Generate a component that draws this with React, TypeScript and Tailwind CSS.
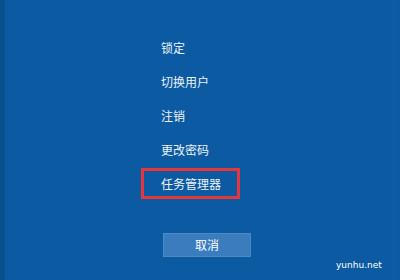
const items = ["锁定", "切换用户", "注销", "更改密码", "任务管理器"];

export default function App() {
  return (
    <div
      className="relative w-[400px] h-[280px] overflow-hidden bg-[#0b5aa2] text-white"
      style={{ fontFamily: '"Noto Sans CJK SC", "Noto Sans", sans-serif' }}
    >
      <div className="absolute left-0 top-0 h-full w-[5px] bg-[#09508f]" />
      <div className="absolute right-[6px] top-0 h-full w-px bg-[#0e60aa]" />
      <div className="flex flex-col pl-[161px] pt-[31px]">
        {items.map((t, i) => (
          <div key={t} className="relative h-[34px] flex items-center text-[12px] leading-none text-[#eef3f9]">
            {t}
            {i === 4 && (
              <div className="absolute left-[-20px] top-[1px] w-[99px] h-[31px] border-[3px] border-[#e4363b]" />
            )}
          </div>
        ))}
        <button className="mt-[32px] ml-[2px] w-[88px] h-[24px] bg-[#3a7cbd] border border-[#4a88c6] text-[12px] text-white leading-none flex items-center justify-center">
          取消
        </button>
      </div>
      <div className="absolute left-[336px] top-[259px] text-[9px] text-white" style={{ fontFamily: '"DejaVu Sans", sans-serif' }}>
        yunhu.net
      </div>
    </div>
  );
}
